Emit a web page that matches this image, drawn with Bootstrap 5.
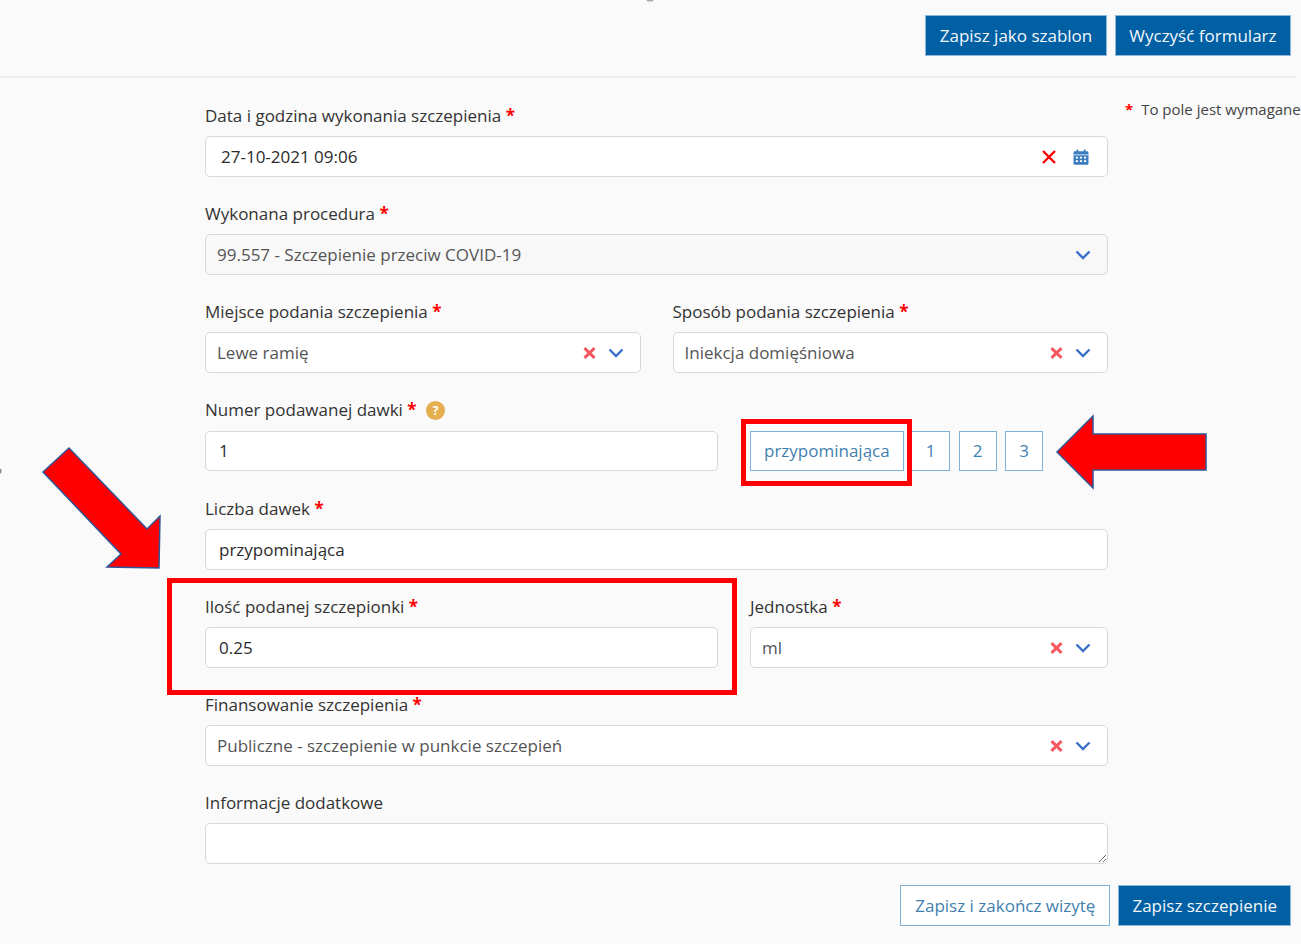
<!DOCTYPE html>
<html lang="pl">
<head>
<meta charset="utf-8">
<title>Szczepienie</title>
<link href="https://cdn.jsdelivr.net/npm/bootstrap@5.3.0/dist/css/bootstrap.min.css" rel="stylesheet">
<style>
html,body{height:944px;overflow:hidden}
body{position:relative;background:#fafafa;font-family:"Open Sans","Noto Sans",sans-serif;font-size:17px;color:#333}
.top-strip{height:78px;margin-right:5px;border-bottom:2px solid #eeeeee;padding:15px 5px 0 0;gap:8px}
.act{height:41px;border-radius:0;font-size:17px;line-height:24px;padding:7px 13.5px;white-space:nowrap}
.act-fill{background:#0060a3;border:1px solid #8fb8d8;color:#f3f7fb}
.act-line{background:#fff;border:1px solid #7fb0d6;color:#3f7fb0}
.act-wide{padding:7px 14px}
.act-slim{padding:7px 13px}
.main-area{padding:28px 0 0 205px}
.form-col{width:903px;flex:none}
.side-note{font-size:15px;line-height:20px;margin:-7px 0 0 17px;white-space:nowrap;color:#444}
.req{color:#f00;font-weight:700}
.side-note .req{margin-right:8px}
.grp{margin-bottom:27px}
.grp label{display:block;margin:0 0 10px;line-height:20px;color:#333}
.grp label.lbl-loose{margin-bottom:11px}
.fld{height:41px;border:1px solid #d8d8d8;border-radius:5px;background:#fff;font-size:17px;line-height:24px;color:#2b2b2b;padding:8px 13px 7px;box-shadow:none}
.fld-low{height:40px;margin-bottom:1px;padding-top:7px}
.fld-sel{padding:7px 16px 7px 11px;color:#555}
.fld-off{background:#f8f8f8}
.fld-date{padding:7px 18px 7px 15px}
.fld-area{resize:vertical}
.x-gap{margin-right:12px}
.two{display:grid;column-gap:32px}
.two-eq{grid-template-columns:1fr 1fr}
.two-wide{grid-template-columns:513px 358px}
.opt{height:40px;padding:7px 13px;flex:none}
.opt-num{width:38px;padding:7px 0}
.opt-first{width:39px}
.opts{gap:8.5px;margin-top:31px}
.opts .opt-big{margin-right:-1px}
.hint{width:19px;height:19px;border-radius:50%;background:#e5ae4f;color:#fff;font-size:12px;font-weight:700;line-height:19px;text-align:center;margin-left:5px;display:inline-block;vertical-align:1px}
.foot{gap:8px;padding-right:10px;margin-top:-6px}
.overlay{position:absolute;left:0;top:0;pointer-events:none}
</style>
</head>
<body>
<header class="top-strip d-flex justify-content-end align-items-start">
  <button type="button" class="btn act act-fill">Zapisz jako szablon</button>
  <button type="button" class="btn act act-fill">Wyczyść formularz</button>
</header>
<main class="main-area d-flex align-items-start">
  <form class="form-col">
    <div class="grp">
      <label>Data i godzina wykonania szczepienia <span class="req">*</span></label>
      <div class="fld fld-date d-flex align-items-center">
        <span class="flex-grow-1">27-10-2021 09:06</span>
        <svg width="16" height="14" viewBox="0 0 16 14"><path d="M2 1 14 13M14 1 2 13" stroke="#f00" stroke-width="2.400"/></svg>
        <svg width="16" height="16" viewBox="0 0 16 16" class="ms-3"><path fill="#3b7cc0" d="M.5 3.500Q.5 2.200 1.800 2.200H3.500V.5H5.200V2.200H10.800V.5H12.500V2.200H14.200Q15.500 2.200 15.500 3.500V5.400H.5ZM.5 6.200H15.500V14.400Q15.500 15.700 14.200 15.700H1.800Q.5 15.700 .5 14.400Z"/><path fill="#fff" d="M2.800 7.700H5V9.400H2.800ZM6.900 7.700H9.100V9.400H6.900ZM11 7.700H13.200V9.400H11ZM2.800 11.300H5V13H2.800ZM6.900 11.300H9.100V13H6.900ZM11 11.300H13.200V13H11Z"/></svg>
      </div>
    </div>
    <div class="grp">
      <label>Wykonana procedura <span class="req">*</span></label>
      <div class="fld fld-sel fld-off d-flex align-items-center">
        <span class="flex-grow-1">99.557 - Szczepienie przeciw COVID-19</span>
        <svg width="16" height="10" viewBox="0 0 16 10"><path d="M1.500 1.500 8 8 14.500 1.500" fill="none" stroke="#3a70c8" stroke-width="2.400"/></svg>
      </div>
    </div>
    <div class="two two-eq">
      <div class="grp">
        <label>Miejsce podania szczepienia <span class="req">*</span></label>
        <div class="fld fld-sel d-flex align-items-center">
          <span class="flex-grow-1">Lewe ramię</span>
          <svg width="13" height="12" viewBox="0 0 13 12" class="x-gap"><path d="M1.500 1.200 11.500 10.800M11.500 1.200 1.500 10.800" stroke="#f4595f" stroke-width="3"/></svg>
          <svg width="16" height="10" viewBox="0 0 16 10"><path d="M1.500 1.500 8 8 14.500 1.500" fill="none" stroke="#3a70c8" stroke-width="2.400"/></svg>
        </div>
      </div>
      <div class="grp">
        <label>Sposób podania szczepienia <span class="req">*</span></label>
        <div class="fld fld-sel d-flex align-items-center">
          <span class="flex-grow-1">Iniekcja domięśniowa</span>
          <svg width="13" height="12" viewBox="0 0 13 12" class="x-gap"><path d="M1.500 1.200 11.500 10.800M11.500 1.200 1.500 10.800" stroke="#f4595f" stroke-width="3"/></svg>
          <svg width="16" height="10" viewBox="0 0 16 10"><path d="M1.500 1.500 8 8 14.500 1.500" fill="none" stroke="#3a70c8" stroke-width="2.400"/></svg>
        </div>
      </div>
    </div>
    <div class="two two-wide">
      <div class="grp">
        <label class="lbl-loose">Numer podawanej dawki <span class="req">*</span> <span class="hint">?</span></label>
        <div class="fld fld-low">1</div>
      </div>
      <div class="opts d-flex align-items-start">
        <button type="button" class="btn act act-line opt opt-big">przypominająca</button>
        <button type="button" class="btn act act-line opt opt-num opt-first">1</button>
        <button type="button" class="btn act act-line opt opt-num">2</button>
        <button type="button" class="btn act act-line opt opt-num">3</button>
      </div>
    </div>
    <div class="grp">
      <label>Liczba dawek <span class="req">*</span></label>
      <div class="fld">przypominająca</div>
    </div>
    <div class="two two-wide">
      <div class="grp">
        <label>Ilość podanej szczepionki <span class="req">*</span></label>
        <div class="fld">0.25</div>
      </div>
      <div class="grp">
        <label>Jednostka <span class="req">*</span></label>
        <div class="fld fld-sel d-flex align-items-center">
          <span class="flex-grow-1">ml</span>
          <svg width="13" height="12" viewBox="0 0 13 12" class="x-gap"><path d="M1.500 1.200 11.500 10.800M11.500 1.200 1.500 10.800" stroke="#f4595f" stroke-width="3"/></svg>
          <svg width="16" height="10" viewBox="0 0 16 10"><path d="M1.500 1.500 8 8 14.500 1.500" fill="none" stroke="#3a70c8" stroke-width="2.400"/></svg>
        </div>
      </div>
    </div>
    <div class="grp">
      <label>Finansowanie szczepienia <span class="req">*</span></label>
      <div class="fld fld-sel d-flex align-items-center">
        <span class="flex-grow-1">Publiczne - szczepienie w punkcie szczepień</span>
        <svg width="13" height="12" viewBox="0 0 13 12" class="x-gap"><path d="M1.500 1.200 11.500 10.800M11.500 1.200 1.500 10.800" stroke="#f4595f" stroke-width="3"/></svg>
        <svg width="16" height="10" viewBox="0 0 16 10"><path d="M1.500 1.500 8 8 14.500 1.500" fill="none" stroke="#3a70c8" stroke-width="2.400"/></svg>
      </div>
    </div>
    <div class="grp">
      <label>Informacje dodatkowe</label>
      <textarea class="form-control fld fld-area" rows="1"></textarea>
    </div>
  </form>
  <aside class="side-note"><span class="req">*</span>To pole jest wymagane</aside>
</main>
<footer class="foot d-flex justify-content-end">
  <button type="button" class="btn act act-line act-wide">Zapisz i zakończ wizytę</button>
  <button type="button" class="btn act act-fill act-slim">Zapisz szczepienie</button>
</footer>
<svg class="overlay" width="1301" height="944" viewBox="0 0 1301 944">
  <ellipse cx="650" cy="0" rx="3.500" ry="1.500" fill="#aaa"/>
  <ellipse cx="0" cy="471" rx="1.500" ry="2.500" fill="#888"/>
  <g fill="none" stroke="#f00" stroke-width="5">
    <rect x="743.500" y="421.500" width="166" height="62"/>
    <rect x="169.500" y="580.500" width="565" height="112"/>
  </g>
  <g fill="#f00" stroke="#2f5597" stroke-width="1.500">
    <path d="M1057 452 1093 416V434H1206V470H1093V488Z"/>
    <path d="M43 472 69 448 147 529 160 516 159 568 107 567 121 554Z"/>
  </g>
</svg>
<script src="https://cdn.jsdelivr.net/npm/bootstrap@5.3.0/dist/js/bootstrap.bundle.min.js"></script>
</body>
</html>
